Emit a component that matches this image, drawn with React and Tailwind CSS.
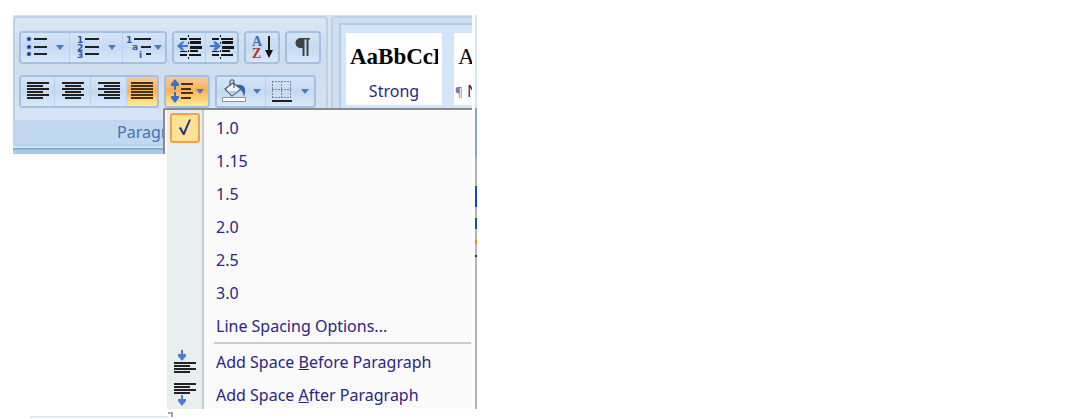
const ink = '#222222';

function Lines({ rows, color = ink }) {
  return rows.map(([x, y, w]) => (
    <rect key={`${x}-${y}`} x={x} y={y} width={w} height="2" fill={color} />
  ));
}

function Caret() {
  return (
    <svg width="8" height="5" viewBox="0 0 8 5" className="shrink-0" aria-hidden="true">
      <path d="M0 0h8L4 5z" fill="#4a7ab8" />
    </svg>
  );
}

function Icon({ width = 24, height = 24, children }) {
  return (
    <svg width={width} height={height} viewBox={`0 0 ${width} ${height}`} className="shrink-0" aria-hidden="true">
      {children}
    </svg>
  );
}

function Mark({ x, y, children }) {
  return (
    <text x={x} y={y} fill="#3155b4" className="font-['DejaVu_Sans',sans-serif] text-[9px] font-bold">
      {children}
    </text>
  );
}

function BulletsIcon() {
  return (
    <Icon>
      {[4, 12, 19].map((y) => (
        <g key={y}>
          <circle cx="3" cy={y} r="2.3" fill="#4b72cb" />
          <circle cx="3" cy={y} r="1.300" fill="#1c3483" />
        </g>
      ))}
      <Lines rows={[[8, 3, 13], [8, 11, 13], [8, 18, 13]]} />
    </Icon>
  );
}

function NumberingIcon() {
  return (
    <Icon>
      <Mark x="1" y="8">1</Mark>
      <Mark x="1" y="16">2</Mark>
      <Mark x="1" y="23">3</Mark>
      <Lines rows={[[9, 3, 14], [9, 11, 14], [9, 18, 14]]} />
    </Icon>
  );
}

function MultilevelIcon() {
  return (
    <Icon width={26}>
      <Mark x="0" y="8">1</Mark>
      <Mark x="6" y="15">a</Mark>
      <Mark x="13" y="23">i</Mark>
      <Lines rows={[[8, 3, 17], [15, 11, 10], [20, 18, 5]]} />
    </Icon>
  );
}

function IndentIcon({ increase }) {
  return (
    <Icon width={26}>
      <g fill="#151515">
        <path d="M11 0h1v2h-1zM11 7h1v2h-1zM11 15h1v2h-1zM11 22h1v2h-1z" />
        <path d="M3 3h7v2H3zM12 3h12v2H12zM13 6h11v3H13zM13 11h12v3H13zM13 15h8v2h-8zM3 16h7v1H3zM3 19h7v2H3zM12 19h12v2H12z" />
      </g>
      {increase ? (
        <path d="M1 10h5L4 6.500h3l5 4.500-5 4.500H4L6 12H1z" fill="#3f77d4" />
      ) : (
        <path d="M11 10H5L7.500 6.500h-2.500L0 11l5 4.500h2.500L5 12h6z" fill="#3f77d4" />
      )}
    </Icon>
  );
}

function SortIcon() {
  return (
    <Icon>
      <text x="2" y="11" fill="#4068b8" className="font-['Liberation_Serif',serif] text-[14px] font-bold">A</text>
      <text x="2" y="23" fill="#b33232" className="font-['Liberation_Serif',serif] text-[14px] font-bold">Z</text>
      <path d="M18 1h2v14h3l-4 8-4-8h3z" fill="#151515" />
    </Icon>
  );
}

function PilcrowIcon() {
  return (
    <Icon width={18} height={20}>
      <path d="M7 1h9v1.500h-1.500V19H12.500V2.500H10.500V19H8.500V11H7C4 11 1.500 9 1.500 6S4 1 7 1z" fill="#3c4340" />
    </Icon>
  );
}

const alignRows = {
  left: [[1, 1, 22], [1, 4, 16], [1, 7, 22], [1, 10, 16], [1, 13, 22], [1, 16, 16]],
  center: [[1, 1, 22], [4, 4, 16], [1, 7, 22], [4, 10, 16], [1, 13, 22], [4, 16, 16]],
  right: [[1, 1, 22], [7, 4, 16], [1, 7, 22], [7, 10, 16], [1, 13, 22], [7, 16, 16]],
  justify: [[1, 1, 22], [1, 4, 22], [1, 7, 22], [1, 10, 22], [1, 13, 22], [1, 16, 22]],
};

function AlignIcon({ kind }) {
  return (
    <Icon height={20}>
      <Lines rows={alignRows[kind]} color={kind === 'justify' ? '#4a330c' : ink} />
    </Icon>
  );
}

function LineSpacingIcon() {
  return (
    <Icon>
      <path d="M5 0l4 5v2H6v4H4V7H1V5zM5 24l4-5v-2H6v-4H4v4H1v2z" fill="#3b6fce" />
      <Lines rows={[[11, 4, 12], [11, 9, 10], [11, 13, 12], [11, 18, 10]]} color="#4a330c" />
    </Icon>
  );
}

function ShadingIcon() {
  return (
    <Icon width={26}>
      <path d="M16 6c7-1 10 3 7 12-1-5-2-7-6-8z" fill="#2f62b5" />
      <path d="M4 10L12 4l8 6-9 7z" fill="#f4f8fc" stroke="#4b5d78" strokeWidth="1.200" />
      <path d="M7 12h10l-6 4.500z" fill="#b9cce2" />
      <path d="M9 6V3c0-3 4-3 4 0v6" fill="none" stroke="#4b5d78" strokeWidth="1.200" />
      <rect x="1.500" y="18.500" width="23" height="4" fill="#fff" stroke="#9a9484" />
    </Icon>
  );
}

function BordersIcon() {
  return (
    <Icon width={22}>
      <path
        d="M1.500 2v17M10.500 2v17M19.500 2v17M1 2.500h19M1 10.500h19M1 18.500h19"
        stroke="#78879c"
        strokeDasharray="2 1"
        fill="none"
      />
      <rect x="1" y="21" width="20" height="2" fill={ink} />
    </Icon>
  );
}

function SpaceBeforeIcon() {
  return (
    <Icon>
      <path d="M8 0h2v4h3v2l-4 5-4-5V4h3z" fill="#4b7bd6" />
      <Lines rows={[[1, 12, 22], [1, 15, 16], [1, 18, 22], [1, 21, 16]]} />
    </Icon>
  );
}

function SpaceAfterIcon() {
  return (
    <Icon>
      <Lines rows={[[1, 0, 22], [1, 3, 16], [1, 6, 22], [1, 9, 16]]} />
      <path d="M8 12h2v4h3v2l-4 5-4-5v-2h3z" fill="#4b7bd6" />
    </Icon>
  );
}

function CheckIcon() {
  return (
    <Icon width={16} height={20}>
      <path d="M2 10l2-1 2.500 5L12 1.500h2L7.500 17H6z" fill="#2b2f7d" />
    </Icon>
  );
}

function ButtonGroup({ children }) {
  return (
    <div className="flex h-[33px] overflow-hidden rounded-[4px] border-2 border-[#a3bfe1] divide-x divide-[#b9d0ec]">
      {children}
    </div>
  );
}

function ToolButton({ label, width, active, caret, children }) {
  const fill = active
    ? 'bg-linear-to-b from-[#f5cb9c] via-[#fdb054] via-45% to-[#ffec98]'
    : 'bg-linear-to-b from-[#d6e5f6] via-[#c5daf2] via-50% to-[#d8e8fa]';
  return (
    <button
      type="button"
      aria-label={label}
      aria-pressed={active}
      className={`flex items-center justify-center pb-[1px] ${caret || ''} ${width} ${fill}`}
    >
      {children}
      {caret && <Caret />}
    </button>
  );
}

function ParagraphGroup() {
  return (
    <section className="flex w-[315px] shrink-0 flex-col overflow-hidden rounded-[4px] border-2 border-[#bdd0e5] bg-linear-to-b from-[#dce7f3] via-[#cddcee] via-30% to-[#dae8f6]">
      <div className="flex gap-[5px] pt-[13px] pl-[4px]">
        <ButtonGroup>
          <ToolButton label="Bullets" width="w-[49px]" caret="gap-[6px]"><BulletsIcon /></ToolButton>
          <ToolButton label="Numbering" width="w-[53px]" caret="gap-[8px]"><NumberingIcon /></ToolButton>
          <ToolButton label="Multilevel list" width="w-[42px]" caret="gap-[2px]"><MultilevelIcon /></ToolButton>
        </ButtonGroup>
        <ButtonGroup>
          <ToolButton label="Decrease indent" width="w-[32px]"><IndentIcon /></ToolButton>
          <ToolButton label="Increase indent" width="w-[31px]"><IndentIcon increase /></ToolButton>
        </ButtonGroup>
        <ButtonGroup>
          <ToolButton label="Sort" width="w-[32px]"><SortIcon /></ToolButton>
        </ButtonGroup>
        <ButtonGroup>
          <ToolButton label="Show paragraph marks" width="w-[32px]"><PilcrowIcon /></ToolButton>
        </ButtonGroup>
      </div>
      <div className="flex gap-[5px] pt-[11px] pl-[4px]">
        <ButtonGroup>
          <ToolButton label="Align left" width="w-[34px]"><AlignIcon kind="left" /></ToolButton>
          <ToolButton label="Center" width="w-[36px]"><AlignIcon kind="center" /></ToolButton>
          <ToolButton label="Align right" width="w-[36px]"><AlignIcon kind="right" /></ToolButton>
          <ToolButton label="Justify" width="w-[30px]" active><AlignIcon kind="justify" /></ToolButton>
        </ButtonGroup>
        <ButtonGroup>
          <ToolButton label="Line spacing" width="w-[42px]" caret="gap-[2px]" active><LineSpacingIcon /></ToolButton>
        </ButtonGroup>
        <ButtonGroup>
          <ToolButton label="Shading" width="w-[49px]" caret="gap-[6px]"><ShadingIcon /></ToolButton>
          <ToolButton label="Borders" width="w-[48px]" caret="gap-[8px]"><BordersIcon /></ToolButton>
        </ButtonGroup>
      </div>
      <h2 className="mt-[12px] h-[24px] bg-[#c1d8f0] pr-[28px] text-center text-[16px] leading-[24px] text-[#4a70b0]">
        Paragraph
      </h2>
    </section>
  );
}

function StyleCard({ sample, name, nameClass, bold }) {
  return (
    <button
      type="button"
      className="flex h-[72px] w-[96px] shrink-0 flex-col bg-white whitespace-nowrap"
    >
      <span className="mt-[8px] w-full px-[4px]">
        <span
          className={`block overflow-hidden text-left font-['Liberation_Serif',serif] text-[23px] leading-[32px] text-black ${bold ? 'font-bold' : ''}`}
        >
          {sample}
        </span>
      </span>
      <span className={`mt-[6px] w-full text-[16px] leading-[24px] text-[#2c2580] ${nameClass}`}>{name}</span>
    </button>
  );
}

function StylesGroup() {
  return (
    <section className="min-w-0 flex-1 overflow-hidden rounded-tl-[4px] border-t-2 border-l-2 border-[#bdd0e5] bg-[#cfdff0] pt-[5px] pl-[6px]">
      <div className="flex h-full gap-[12px] border-t-2 border-l-2 border-[#b0caea] bg-[#d3e5f8] pt-[8px] pl-[5px]">
        <StyleCard sample="AaBbCcDd" name="Strong" nameClass="text-center" bold />
        <StyleCard
          sample="AaBbCcDd"
          name={<><span className="text-[12px] text-[#7a78b5]">¶</span> Normal</>}
          nameClass="pl-[1px] text-left"
        />
      </div>
    </section>
  );
}

const spacings = ['1.0', '1.15', '1.5', '2.0', '2.5', '3.0'];

function MenuItem({ icon, checked, children }) {
  return (
    <li role="none">
      <button
        type="button"
        role={checked === undefined ? 'menuitem' : 'menuitemradio'}
        aria-checked={checked}
        className="flex h-[28px] w-full items-center gap-[14px] text-left text-[16px] whitespace-nowrap text-[#2c2580]"
      >
        <span className="flex w-[35px] shrink-0 justify-center">{icon}</span>
        <span>{children}</span>
      </button>
    </li>
  );
}

function LineSpacingMenu() {
  return (
    <div className="relative z-10 -mt-[46px] ml-[150px] flex">
      <div className="h-[46px] w-[4px] rounded-tl-[2px] border-t-2 border-l-2 border-[#8b8b8b] bg-[#fafafa]" />
      <div className="flex-1 border-t-2 border-[#8b8b8b] bg-[linear-gradient(to_right,#e8eeee_35px,#c9cbcb_35px,#c9cbcb_37px,#fafafa_37px)] pt-[4px]">
        <ul role="menu" aria-label="Line spacing" className="flex flex-col gap-[5px]">
          {spacings.map((value) => (
            <MenuItem
              key={value}
              checked={value === '1.0'}
              icon={value === '1.0' && (
                <span className="flex h-[30px] w-[30px] items-center justify-center rounded-[3px] border-2 border-[#f2a04e] bg-[#ffe294]">
                  <CheckIcon />
                </span>
              )}
            >
              {value}
            </MenuItem>
          ))}
          <MenuItem>Line Spacing Options...</MenuItem>
        </ul>
        <hr className="mt-[2px] mr-[1px] mb-[4px] ml-[47px] h-[2px] border-0 bg-[#cbcbcb]" />
        <ul role="menu" aria-label="Paragraph spacing" className="flex flex-col gap-[5px]">
          <MenuItem icon={<SpaceBeforeIcon />}>Add Space <u>B</u>efore Paragraph</MenuItem>
          <MenuItem icon={<SpaceAfterIcon />}>Add Space <u>A</u>fter Paragraph</MenuItem>
        </ul>
      </div>
    </div>
  );
}

// Thin slice of the window that shows past the right end of the ribbon
function WindowEdge() {
  return (
    <div className="flex w-[2px] shrink-0 flex-col bg-[#b4b4b4]">
      <div className="h-[93px] bg-[#d3e5f8]" />
      <div className="h-[49px] bg-[#8aa5c2]" />
      <div className="mt-[29px] h-[21px] bg-[#1148c8]" />
      <div className="mt-[11px] h-[11px] bg-[#1148c8]" />
      <div className="mt-[11px] h-[4px] bg-[#d3961c]" />
      <div className="mt-[11px] h-[2px] bg-[#333333]" />
    </div>
  );
}

export default function App() {
  return (
    <main className="min-h-screen bg-white pt-[15px] pl-[13px] font-['Noto_Sans',sans-serif]">
      <div className="flex max-w-[464px] gap-[3px]">
        <div className="min-w-0 flex-1">
          <div className="flex h-[131px] gap-[3px] bg-[#d5e3f2] pt-[1px]">
            <ParagraphGroup />
            <StylesGroup />
          </div>
          <div className="h-[8px] border-t-2 border-[#b5ecf6] bg-linear-to-b from-[#8199b8] to-[#a9c6ec] to-40%" />
          <LineSpacingMenu />
        </div>
        <WindowEdge />
      </div>
      <div className="flex items-end pt-[3px] pl-[17px]">
        <div className="h-[2px] w-[138px] bg-[#dcecfb]" />
        <div className="mb-[1px] h-[5px] w-[5px] border-t-2 border-r-2 border-[#a5a5a5]" />
      </div>
    </main>
  );
}
